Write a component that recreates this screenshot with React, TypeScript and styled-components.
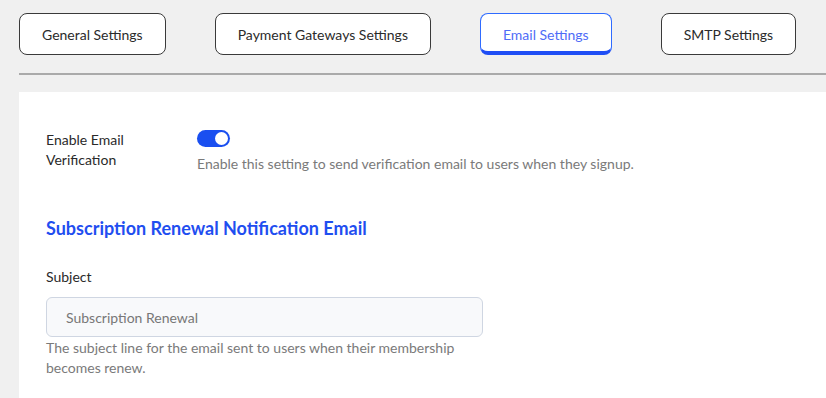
import React, { useState } from 'react';
import styled, { createGlobalStyle } from 'styled-components';

const GlobalStyle = createGlobalStyle`
  html, body {
    margin: 0;
    padding: 0;
    background: #f0f0f0;
    font-family: "Lato", "Liberation Sans", sans-serif;
  }
  * { box-sizing: border-box; }
`;

const Page = styled.div`
  width: 826px;
  height: 398px;
  overflow: hidden;
  padding: 13px 0 0 19px;
`;

const TabBar = styled.nav`
  display: flex;
  gap: 49px;
  padding-bottom: 18px;
  border-bottom: 2px solid #aaaaaa;
  margin-right: -20px;
`;

const Tab = styled.button<{ $active?: boolean }>`
  height: 42px;
  padding: 0 22px;
  background: #fff;
  border: 1px solid ${(p) => (p.$active ? '#2f6bff' : '#3a3a3a')};
  border-bottom: ${(p) => (p.$active ? '4px solid #1f4ef5' : '1px solid #3a3a3a')};
  border-radius: 8px;
  font-family: inherit;
  font-size: 14px;
  color: ${(p) => (p.$active ? '#4f6cf7' : '#2b2b2b')};
  cursor: pointer;
  padding-top: ${(p) => (p.$active ? '3px' : '0')};
`;

const Card = styled.section`
  margin-top: 17px;
  margin-right: -20px;
  background: #fff;
  padding: 38px 27px 40px;
`;

const SettingRow = styled.div`
  display: flex;
`;

const SettingLabel = styled.div`
  width: 151px;
  font-size: 14px;
  line-height: 20px;
  color: #2a2a2a;
`;

const SettingBody = styled.div`
  display: flex;
  flex-direction: column;
  gap: 7px;
`;

const Switch = styled.button<{ $on: boolean }>`
  position: relative;
  width: 33px;
  height: 17px;
  border: none;
  border-radius: 9px;
  padding: 0;
  background: ${(p) => (p.$on ? '#1a4ff0' : '#c4c4c4')};
  cursor: pointer;

  &::after {
    content: '';
    position: absolute;
    top: 2px;
    left: ${(p) => (p.$on ? '18px' : '2px')};
    width: 13px;
    height: 13px;
    border-radius: 50%;
    background: #fff;
  }
`;

const Hint = styled.p`
  margin: 0;
  font-size: 14px;
  line-height: 20px;
  color: #7a7a7a;
`;

const SectionTitle = styled.h2`
  margin: 43px 0 0;
  font-size: 18px;
  font-weight: 700;
  color: #1f4ef0;
`;

const Field = styled.div`
  margin-top: 28px;
  width: 437px;
  display: flex;
  flex-direction: column;
`;

const FieldLabel = styled.label`
  font-size: 14px;
  line-height: 20px;
  color: #2a2a2a;
  margin-bottom: 10px;
`;

const Input = styled.input`
  height: 40px;
  width: 100%;
  border: 1px solid #cfd6e2;
  border-radius: 6px;
  background: #f8f9fb;
  padding: 0 19px;
  font-family: inherit;
  font-size: 14px;
  color: #777;
  outline: none;
  margin-bottom: 1px;
`;

const tabs = ['General Settings', 'Payment Gateways Settings', 'Email Settings', 'SMTP Settings'];

export default function App() {
  const [active, setActive] = useState('Email Settings');
  const [verify, setVerify] = useState(true);

  return (
    <Page>
      <GlobalStyle />
      <TabBar>
        {tabs.map((t) => (
          <Tab key={t} $active={t === active} onClick={() => setActive(t)}>
            {t}
          </Tab>
        ))}
      </TabBar>
      <Card>
        <SettingRow>
          <SettingLabel>
            Enable Email
            <br />
            Verification
          </SettingLabel>
          <SettingBody>
            <Switch $on={verify} onClick={() => setVerify(!verify)} aria-label="Enable Email Verification" />
            <Hint>Enable this setting to send verification email to users when they signup.</Hint>
          </SettingBody>
        </SettingRow>
        <SectionTitle>Subscription Renewal Notification Email</SectionTitle>
        <Field>
          <FieldLabel>Subject</FieldLabel>
          <Input defaultValue="Subscription Renewal" />
          <Hint>The subject line for the email sent to users when their membership becomes renew.</Hint>
        </Field>
      </Card>
    </Page>
  );
}
